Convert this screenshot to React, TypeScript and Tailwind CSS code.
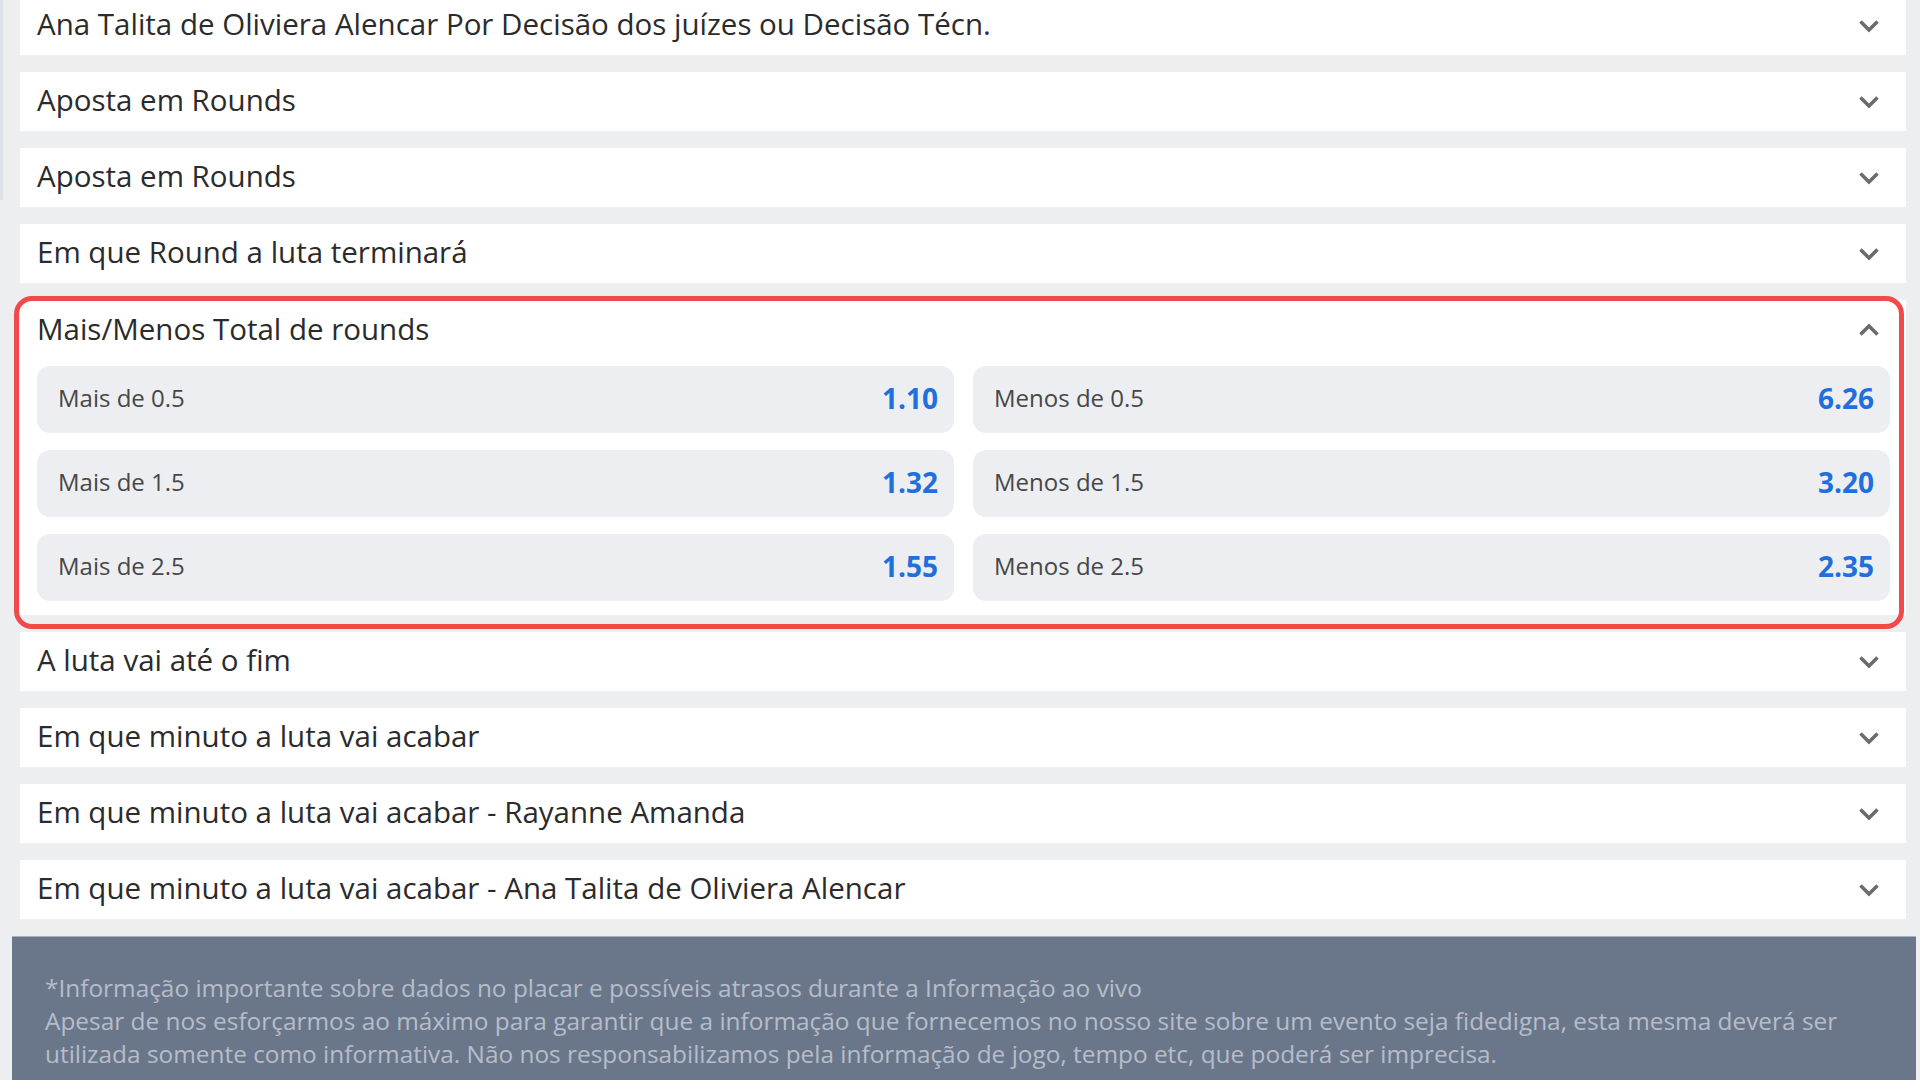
import React, { useState } from "react";

interface Odd {
  label: string;
  value: string;
}

interface Market {
  title: string;
  odds?: Odd[][];
}

const markets: Market[] = [
  { title: "Ana Talita de Oliviera Alencar Por Decisão dos juízes ou Decisão Técn." },
  { title: "Aposta em Rounds" },
  { title: "Aposta em Rounds" },
  { title: "Em que Round a luta terminará" },
  {
    title: "Mais/Menos Total de rounds",
    odds: [
      [
        { label: "Mais de 0.5", value: "1.10" },
        { label: "Menos de 0.5", value: "6.26" },
      ],
      [
        { label: "Mais de 1.5", value: "1.32" },
        { label: "Menos de 1.5", value: "3.20" },
      ],
      [
        { label: "Mais de 2.5", value: "1.55" },
        { label: "Menos de 2.5", value: "2.35" },
      ],
    ],
  },
  { title: "A luta vai até o fim" },
  { title: "Em que minuto a luta vai acabar" },
  { title: "Em que minuto a luta vai acabar - Rayanne Amanda" },
  { title: "Em que minuto a luta vai acabar - Ana Talita de Oliviera Alencar" },
];

const Chevron: React.FC<{ up?: boolean }> = ({ up }) => (
  <svg width="22" height="14" viewBox="0 0 22 14" className={up ? "rotate-180" : ""}>
    <path d="M2.5 2.5 L11 11 L19.5 2.5" fill="none" stroke="#6b6b6b" strokeWidth="3.6" />
  </svg>
);

const MarketRow: React.FC<{ market: Market }> = ({ market }) => {
  const [open, setOpen] = useState<boolean>(!!market.odds);

  if (!market.odds) {
    return (
      <div
        className="flex h-[59px] items-center justify-between bg-white pl-[17px] pr-[26px] cursor-pointer"
        onClick={() => setOpen(!open)}
      >
        <span className="pb-[2px] text-[29.5px] text-[#2b2b2b]">{market.title}</span>
        <Chevron up={open} />
      </div>
    );
  }

  return (
    <div className="relative">
      {/* highlight frame around the opened market */}
      <div className="pointer-events-none absolute -left-[6px] -top-[4px] right-[2px] -bottom-[14px] rounded-[18px] border-[5px] border-[#f24a4a]" />
      <div className="bg-white pl-[17px] pr-[16px] pb-[14px]">
        <div
          className="flex h-[60px] items-center justify-between pr-[10px] cursor-pointer"
          onClick={() => setOpen(!open)}
        >
          <span className="pb-[2px] text-[29.5px] text-[#2b2b2b]">{market.title}</span>
          <Chevron up={open} />
        </div>
        {open && (
          <div className="flex flex-col gap-[17px] pt-[6px]">
            {market.odds.map((row, i) => (
              <div key={i} className="grid grid-cols-2 gap-[19px]">
                {row.map((odd) => (
                  <div
                    key={odd.label}
                    className="flex h-[67px] items-center justify-between rounded-[13px] bg-[#eceef1] pl-[21px] pr-[16px] pb-[3px]"
                  >
                    <span className="text-[24px] text-[#474747]">{odd.label}</span>
                    <span className="text-[28px] font-bold text-[#1f6fdc]">{odd.value}</span>
                  </div>
                ))}
              </div>
            ))}
          </div>
        )}
      </div>
    </div>
  );
};

export default function App() {
  return (
    <div className="relative min-h-screen overflow-hidden bg-[#edeef0] font-['Open_Sans',sans-serif]">
      <div className="absolute left-0 top-0 h-[200px] w-[3px] bg-[#dde1e8]" />
      <div className="-mt-[4px] flex flex-col gap-[17px] pl-[20px] pr-[14px]">
        {markets.map((m, i) => (
          <MarketRow key={i} market={m} />
        ))}
      </div>
      <div className="mt-[17px] ml-[12px] mr-[4px] border-t border-[#a9b1bd] bg-[#6a778b] px-[33px] pt-[34px] pb-[40px] text-[24.4px] leading-[33px] text-[#b6bdca]">
        <p>*Informação importante sobre dados no placar e possíveis atrasos durante a Informação ao vivo</p>
        <p>
          Apesar de nos esforçarmos ao máximo para garantir que a informação que fornecemos no nosso site sobre um
          evento seja fidedigna, esta mesma deverá ser utilizada somente como informativa. Não nos
          responsabilizamos pela informação de jogo, tempo etc, que poderá ser imprecisa.
        </p>
      </div>
    </div>
  );
}
